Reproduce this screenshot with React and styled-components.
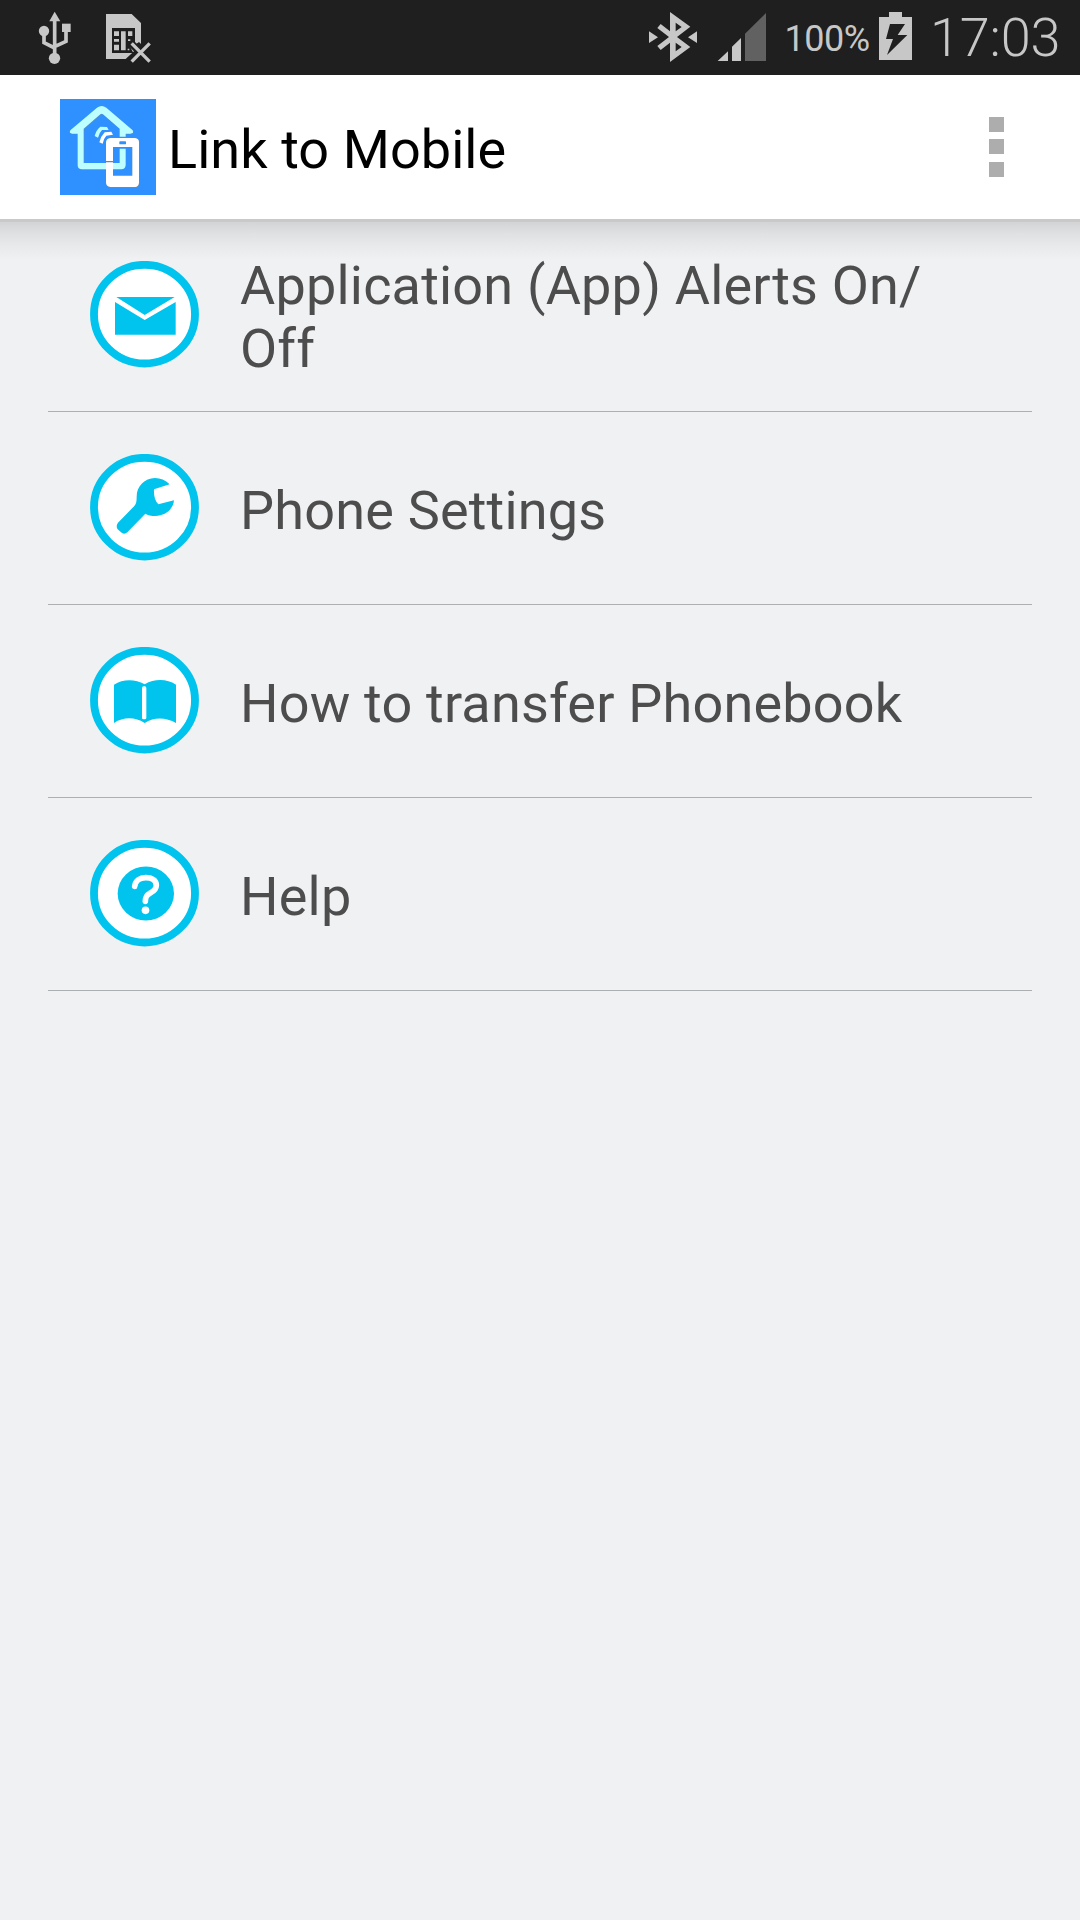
import React from "react";
import styled, { createGlobalStyle } from "styled-components";

const GlobalStyle = createGlobalStyle`
  body { margin: 0; background: #eff1f3; }
  * { box-sizing: border-box; }
`;

const Screen = styled.div`
  width: 1080px;
  height: 1920px;
  display: flex;
  flex-direction: column;
  background: #eff1f3;
  font-family: Roboto, "Noto Sans", sans-serif;
  overflow: hidden;
`;

const StatusBar = styled.header`
  height: 75px;
  flex: none;
  display: flex;
  justify-content: space-between;
  background: #1f1f1f;
  color: #c7c7c7;
`;

const StatusGroup = styled.div`
  display: flex;
  height: 75px;
`;

const StatusIcon = styled.svg`
  display: block;
  flex: none;
  width: ${(p) => p.$w}px;
  height: 75px;
`;

const StatusText = styled.span`
  width: ${(p) => p.$w}px;
  padding-left: ${(p) => p.$pl}px;
  padding-top: ${(p) => p.$pt}px;
  font-size: ${(p) => p.$size}px;
  line-height: ${(p) => p.$size}px;
  font-weight: ${(p) => p.$weight};
  letter-spacing: ${(p) => p.$ls}px;
  white-space: nowrap;
`;

const ActionBar = styled.div`
  height: 144px;
  flex: none;
  display: flex;
  align-items: center;
  background: #fff;
  padding: 0 75px 0 60px;
`;

const Logo = styled.svg`
  display: block;
  width: 96px;
  height: 96px;
`;

const Title = styled.h1`
  margin: 0;
  padding: 5px 0 0 12px;
  flex: 1;
  font-size: 54px;
  line-height: 64px;
  font-weight: 400;
  color: #000;
  letter-spacing: 0.07px;
`;

const MenuButton = styled.button`
  border: 0;
  padding: 0;
  background: none;
  display: flex;
  flex-direction: column;
  gap: 7px;
  width: 16px;
`;

const Dot = styled.span`
  width: 15px;
  height: 15px;
  background: #adadad;

  &:last-child {
    margin-top: 1px;
  }
`;

const Content = styled.main`
  flex: 1;
  border-top: 3px solid #c9c9c9;
  background: linear-gradient(#d3d4d6 0, #e0e1e3 12px, #e9eaec 25px, #eff1f3 38px);
`;

const List = styled.ul`
  list-style: none;
  margin: 0;
  padding: 0 48px;
`;

const Row = styled.li`
  height: ${(p) => (p.$first ? 190 : 193)}px;
  padding: ${(p) => (p.$first ? 0 : 3)}px 0 0 42px;
  display: flex;
  align-items: flex-start;
  border-bottom: 1px solid #adb0b2;
`;

const RowIcon = styled.svg`
  display: block;
  flex: none;
  width: 109px;
  height: 107px;
  margin-top: 39px;
`;

const Label = styled.span`
  width: 720px;
  margin-left: 41px;
  padding-top: ${(p) => (p.$tall ? 32 : 64)}px;
  font-size: 54px;
  line-height: 63px;
  color: #4d4d4d;
  letter-spacing: 0.2px;
  white-space: pre-line;
`;

const CYAN = "#00c3ee";

function Ring({ top, children }) {
  return (
    <RowIcon viewBox={`150 ${top} 327 321`}>
      <ellipse cx="313.5" cy={top + 159.5} rx="151.5" ry="148" fill="#fff" stroke={CYAN} strokeWidth="23.5" />
      {children}
    </RowIcon>
  );
}

const MailIcon = () => (
  <Ring top={63}>
    <path d="M229 171H404L314 225Z M225 186L314 240L407 186V284H225Z" fill={CYAN} />
  </Ring>
);

const WrenchIcon = () => (
  <Ring top={42}>
    <path
      d="M389 133C376 120 361 114 345 114C314 115 290 138 290 170C290 183 289 191 283 198L234 248C229 254 229 262 233 268L246 279C252 283 257 282 262 277L316 221C323 226 334 228 346 228C377 227 400 207 402 181L355 193C345 182 341 168 342 148Z"
      fill={CYAN}
    />
  </Ring>
);

const BookIcon = () => (
  <Ring top={51}>
    <path
      d="M222 164C249 147 284 146 314 163C344 146 380 146 408 164V279C379 263 344 260 314 279C284 260 250 261 222 279Z"
      fill={CYAN}
    />
    <rect x="306" y="169" width="13" height="99" rx="5" fill="#fff" />
  </Ring>
);

const HelpIcon = () => (
  <Ring top={60}>
    <ellipse cx="317.5" cy="220.5" rx="84.5" ry="81" fill={CYAN} />
    <path d="M284 199C286 181 300 173 317 173C336 173 349 181 349 196C349 208 341 214 331 219C320 225 316 230 316 244" fill="none" stroke="#fff" strokeWidth="17" strokeLinecap="round" />
    <circle cx="316.500" cy="271" r="11.500" fill="#fff" />
  </Ring>
);

const UsbAndSim = () => (
  <StatusIcon $w={180} viewBox="-60 0 540 225" fill="#c7c7c7">
    <path d="M104 35L121 64H88Z" />
    <circle cx="72" cy="93" r="15.500" />
    <rect x="126" y="71" width="26" height="25" />
    <circle cx="103.500" cy="175" r="17" />
    <path d="M104 60V165M72 100V128L104 144M138 92V124L104 140" fill="none" stroke="#c7c7c7" strokeWidth="11" />
    <path d="M258 42H335L363 69V132L357 126L345 134L330 124L322 134L342 154L317 177H258Z" />
    <path d="M276 84H345V133L330 127L328 135L340 159H276Z" fill="#1f1f1f" />
    <path d="M282 94H297V108H282ZM303 94H317V151H303ZM324 94H337V108H324ZM282 117H297V125H282ZM282 134H297V151H282ZM324 118H331V123H324ZM323 146H328V151H323Z" />
    <path d="M335 130L389 185M389 130L335 185" fill="none" stroke="#1f1f1f" strokeWidth="20" />
    <path d="M335 130L389 185M389 130L335 185" fill="none" stroke="#c7c7c7" strokeWidth="10" />
  </StatusIcon>
);

const BluetoothAndSignal = () => (
  <StatusIcon $w={150} viewBox="0 0 450 225" fill="#c7c7c7">
    <path d="M57 94V129L84 111.500ZM201 94V129L174 111.500Z" />
    <path
      d="M120 36L181 80L141 111L181 141L120 186V128L92 150L82 138L117 111L82 84L92 72L120 94ZM137 68V94L155 81ZM137 128V154L155 141Z"
      fillRule="evenodd"
    />
    <path d="M263 183L294 154V183ZM306 183V140L333 114V183Z" />
    <path d="M345 183V101L408 39V183Z" fill="#616161" />
  </StatusIcon>
);

const Battery = () => (
  <StatusIcon $w={33} viewBox="327 0 99 225">
    <path d="M327 51H357V36H396V51H426V180H327Z" fill="#c7c7c7" />
    <path d="M360 72H405L383 105H412L351 165L369 117H348Z" fill="#1f1f1f" />
  </StatusIcon>
);

const AppLogo = () => (
  <Logo viewBox="60 57 288 288">
    <rect x="60" y="57" width="288" height="288" fill="#2f90ff" />
    <path
      d="M91 151L171 83Q185 73 199 83L278 151Q283 161 271 161H257V255Q257 268 244 268H126Q113 268 113 255V161H97Q86 161 91 151ZM131 146V249H239V146L189 103Q185 100 181 103Z"
      fill="#6a8fb0" fillRule="evenodd" transform="translate(2 2)" opacity="0.6"
    />
    <path
      d="M91 151L171 83Q185 73 199 83L278 151Q283 161 271 161H257V255Q257 268 244 268H126Q113 268 113 255V161H97Q86 161 91 151ZM131 146V249H239V146L189 103Q185 100 181 103Z"
      fill="#bdffff" fillRule="evenodd"
    />
    <path d="M164 168Q169 149 181 140L201 141L206 150L186 150Q178 158 174 173Z" fill="#bdffff" />
    <path d="M178 187Q183 168 194 157L214 155L219 164L199 167Q191 175 188 191Z" fill="#fff" />
    <path d="M194 244V190Q197 170 213 170H262V207H217V244Z" fill="#2f90ff" />
    <path d="M212 176H286Q299 177 299 189V310Q298 323 286 323H213Q200 322 200 310V247H221V288H277V203H221V244H200V188Q201 177 212 176Z" fill="#75899f" />
    <rect x="219" y="201" width="58" height="86" fill="#2f90ff" />
    <path d="M198 249H239V206H257V255Q256 268 244 268H198Z" fill="#bdffff" />
    <path d="M211 174H285Q297 175 297 187V308Q296 320 285 321H211Q199 320 198 309V247H219V287H277V201H219V243H198V187Q199 175 211 174Z" fill="#fff" />
    <rect x="238" y="184" width="20" height="9" rx="2" fill="#2f90ff" />
  </Logo>
);

const items = [
  { label: "Application (App) Alerts On/\nOff", icon: MailIcon, tall: true },
  { label: "Phone Settings", icon: WrenchIcon },
  { label: "How to transfer Phonebook", icon: BookIcon },
  { label: "Help", icon: HelpIcon },
];

export default function App() {
  return (
    <Screen>
      <GlobalStyle />
      <StatusBar>
        <StatusGroup>
          <UsbAndSim />
        </StatusGroup>
        <StatusGroup>
          <BluetoothAndSignal />
          <StatusText $w={99} $pl={4.5} $pt={21} $size={36} $weight={400} $ls={-0.5}>100%</StatusText>
          <Battery />
          <StatusText $w={168} $pl={18} $pt={11} $size={54} $weight={300} $ls={-0.2}>17:03</StatusText>
        </StatusGroup>
      </StatusBar>
      <ActionBar>
        <AppLogo />
        <Title>Link to Mobile</Title>
        <MenuButton aria-label="More options">
          <Dot />
          <Dot />
          <Dot />
        </MenuButton>
      </ActionBar>
      <Content>
        <List>
          {items.map(({ label, icon: Icon, tall }, i) => (
            <Row key={label} $first={i === 0}>
              <Icon />
              <Label $tall={tall}>{label}</Label>
            </Row>
          ))}
        </List>
      </Content>
    </Screen>
  );
}
